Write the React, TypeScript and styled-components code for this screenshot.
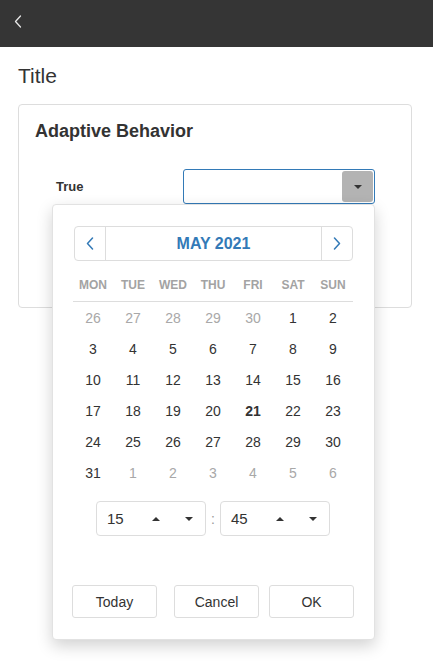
import React from "react";
import styled, { createGlobalStyle } from "styled-components";

const GlobalStyle = createGlobalStyle`
  html, body { margin: 0; padding: 0; background: #fff; }
  body { font-family: "Liberation Sans", Arial, sans-serif; color: #333; }
  * { box-sizing: border-box; }
`;

const Page = styled.div`
  width: 433px;
  min-height: 668px;
`;

const TopBar = styled.header`
  height: 47px;
  background: #353535;
  display: flex;
  align-items: flex-start;
  padding: 15px 0 0 13px;
`;

const BackButton = styled.button`
  border: 0;
  background: none;
  padding: 0;
  width: 9px;
  height: 13px;
  display: flex;
  align-items: center;
  justify-content: center;
  cursor: pointer;
`;

const Content = styled.main`
  padding: 17px 21px 0 18px;
`;

const PageTitle = styled.h1`
  margin: 0;
  font-size: 21px;
  line-height: 24px;
  font-weight: 400;
  color: #333;
`;

const Card = styled.section`
  margin-top: 16px;
  height: 204px;
  border: 1px solid #ddd;
  border-radius: 4px;
  padding: 16px;
`;

const CardTitle = styled.h2`
  margin: 0;
  font-size: 18px;
  line-height: 20px;
  font-weight: 700;
  color: #333;
`;

const FieldRow = styled.div`
  margin-top: 28px;
  padding-left: 21px;
  display: flex;
  align-items: center;
`;

const FieldLabel = styled.label`
  width: 127px;
  font-size: 13px;
  font-weight: 700;
  color: #333;
`;

const PickerAnchor = styled.div`
  position: relative;
  width: 192px;
`;

const InputBox = styled.div`
  height: 35px;
  border: 1px solid #337ab7;
  border-radius: 3px;
  padding: 1px;
  display: flex;
  justify-content: flex-end;
`;

const DropButton = styled.button`
  width: 31px;
  height: 31px;
  border: 0;
  border-radius: 3px;
  background: #b3b3b3;
  display: flex;
  align-items: center;
  justify-content: center;
  padding: 0;
`;

const Caret = styled.span<{ $up?: boolean }>`
  width: 0;
  height: 0;
  border-left: 4px solid transparent;
  border-right: 4px solid transparent;
  ${(p) => (p.$up ? "border-bottom: 4px solid #333;" : "border-top: 4px solid #333;")}
`;

const Popup = styled.div`
  position: absolute;
  top: 100%;
  right: 0;
  width: 323px;
  height: 436px;
  background: #fff;
  border: 1px solid #e2e2e2;
  border-radius: 4px;
  box-shadow: 0 6px 16px rgba(0, 0, 0, 0.18);
  padding: 21px 20px 0 20px;
  z-index: 10;
`;

const Nav = styled.div`
  margin: 0 1px;
  height: 35px;
  border: 1px solid #ddd;
  border-radius: 4px;
  display: flex;
  align-items: stretch;
`;

const NavArrow = styled.button<{ $side: "left" | "right" }>`
  width: 31px;
  border: 0;
  background: none;
  padding: 0;
  display: flex;
  align-items: center;
  justify-content: center;
  ${(p) => (p.$side === "left" ? "border-right: 1px solid #ddd;" : "border-left: 1px solid #ddd;")}
`;

const MonthLabel = styled.div`
  flex: 1;
  display: flex;
  align-items: center;
  justify-content: center;
  font-size: 16px;
  font-weight: 700;
  color: #337ab7;
`;

const WeekHeader = styled.div`
  margin-top: 10px;
  width: 280px;
  height: 31px;
  display: grid;
  grid-template-columns: repeat(7, 40px);
  border-bottom: 1px solid #ddd;
`;

const WeekDay = styled.div`
  text-align: center;
  font-size: 12px;
  font-weight: 700;
  line-height: 28px;
  color: #a3a3a3;
`;

const DayGrid = styled.div`
  width: 280px;
  display: grid;
  grid-template-columns: repeat(7, 40px);
  grid-auto-rows: 31px;
`;

const Day = styled.div<{ $muted?: boolean; $today?: boolean }>`
  display: flex;
  align-items: center;
  justify-content: center;
  font-size: 14px;
  color: ${(p) => (p.$muted ? "#a8a8a8" : "#333")};
  font-weight: ${(p) => (p.$today ? 700 : 400)};
`;

const TimeRow = styled.div`
  margin-top: 13px;
  width: 280px;
  display: flex;
  justify-content: center;
  align-items: center;
  gap: 4px;
`;

const TimeBox = styled.div`
  width: 110px;
  height: 35px;
  border: 1px solid #ddd;
  border-radius: 4px;
  display: flex;
  align-items: center;
  padding-left: 10px;
`;

const TimeValue = styled.span`
  width: 37px;
  font-size: 15px;
  color: #333;
`;

const Spin = styled.span`
  width: 38px;
  display: flex;
  justify-content: center;
`;

const Colon = styled.span`
  font-size: 14px;
  color: #999;
  width: 6px;
  text-align: center;
`;

const Actions = styled.div`
  margin-top: 49px;
  width: 282px;
  margin-left: -1px;
  display: flex;
`;

const ActionButton = styled.button<{ $gap?: number }>`
  width: 85px;
  height: 33px;
  margin-left: ${(p) => p.$gap ?? 0}px;
  border: 1px solid #ddd;
  border-radius: 3px;
  background: #fff;
  font-family: "Liberation Sans", Arial, sans-serif;
  font-size: 14px;
  color: #333;
  padding: 0;
`;

const Chevron = ({ dir, color }: { dir: "l" | "r"; color: string }) => (
  <svg width={8} height={13} viewBox="0 0 8 13" fill="none">
    <polyline
      points={dir === "l" ? "6.5,1 1.5,6.5 6.5,12" : "1.5,1 6.5,6.5 1.5,12"}
      stroke={color}
      strokeWidth="1.5"
      strokeLinecap="round"
      strokeLinejoin="round"
    />
  </svg>
);

const weekDays = ["MON", "TUE", "WED", "THU", "FRI", "SAT", "SUN"];

type Cell = { n: number; muted?: boolean; today?: boolean };
const days: Cell[] = [
  ...[26, 27, 28, 29, 30].map((n) => ({ n, muted: true })),
  ...Array.from({ length: 31 }, (_, i) => ({ n: i + 1, today: i + 1 === 21 })),
  ...[1, 2, 3, 4, 5, 6].map((n) => ({ n, muted: true })),
];

export default function App() {
  return (
    <Page>
      <GlobalStyle />
      <TopBar>
        <BackButton aria-label="Back">
          <svg width="8" height="13" viewBox="0 0 8 13" fill="none">
            <polyline points="6.5,1 1.5,6.5 6.5,12" stroke="#e6e6e6" strokeWidth="1.3" strokeLinecap="round" strokeLinejoin="round" />
          </svg>
        </BackButton>
      </TopBar>
      <Content>
        <PageTitle>Title</PageTitle>
        <Card>
          <CardTitle>Adaptive Behavior</CardTitle>
          <FieldRow>
            <FieldLabel>True</FieldLabel>
            <PickerAnchor>
              <InputBox>
                <DropButton aria-label="Open">
                  <Caret />
                </DropButton>
              </InputBox>
              <Popup>
                <Nav>
                  <NavArrow $side="left" aria-label="Previous month">
                    <Chevron dir="l" color="#337ab7" />
                  </NavArrow>
                  <MonthLabel>MAY 2021</MonthLabel>
                  <NavArrow $side="right" aria-label="Next month">
                    <Chevron dir="r" color="#337ab7" />
                  </NavArrow>
                </Nav>
                <WeekHeader>
                  {weekDays.map((d) => (
                    <WeekDay key={d}>{d}</WeekDay>
                  ))}
                </WeekHeader>
                <DayGrid>
                  {days.map((d, i) => (
                    <Day key={i} $muted={d.muted} $today={d.today}>
                      {d.n}
                    </Day>
                  ))}
                </DayGrid>
                <TimeRow>
                  <TimeBox>
                    <TimeValue>15</TimeValue>
                    <Spin><Caret $up /></Spin>
                    <Spin><Caret /></Spin>
                  </TimeBox>
                  <Colon>:</Colon>
                  <TimeBox>
                    <TimeValue>45</TimeValue>
                    <Spin><Caret $up /></Spin>
                    <Spin><Caret /></Spin>
                  </TimeBox>
                </TimeRow>
                <Actions>
                  <ActionButton>Today</ActionButton>
                  <ActionButton $gap={17}>Cancel</ActionButton>
                  <ActionButton $gap={10}>OK</ActionButton>
                </Actions>
              </Popup>
            </PickerAnchor>
          </FieldRow>
        </Card>
      </Content>
    </Page>
  );
}
